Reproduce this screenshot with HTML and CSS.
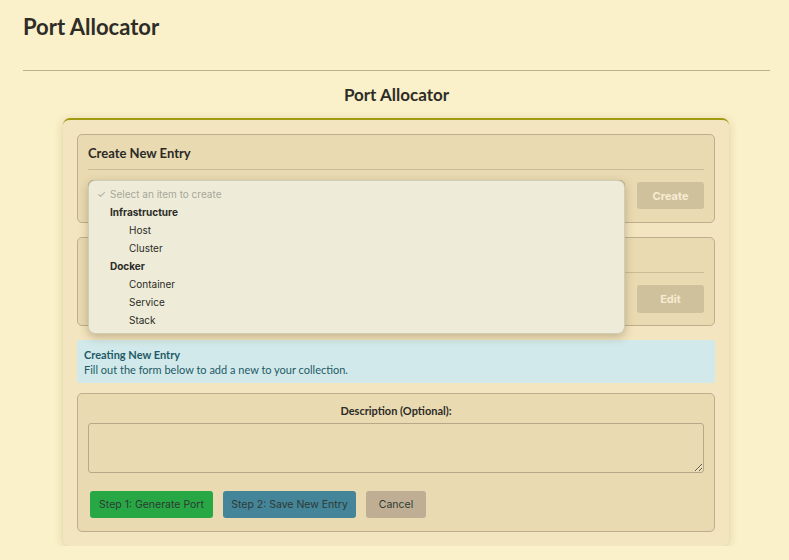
FILE: index.html
```html
<!DOCTYPE html>
<html>
<head>
<meta charset="utf-8">
<link rel="stylesheet" href="styles.css">
</head>
<body>
<div class="page">
  <h1 class="page-title">Port Allocator</h1>
  <hr class="rule">
  <h2 class="app-title">Port Allocator</h2>
  <div class="card">
    <section class="panel">
      <h3 class="panel-head">Create New Entry</h3>
      <div class="row">
        <div class="select"></div>
        <button class="btn-muted">Create</button>
      </div>
      <div class="dropdown">
        <div class="opt opt-selected"><span class="check">✓</span>Select an item to create</div>
        <div class="opt opt-group">Infrastructure</div>
        <div class="opt opt-item">Host</div>
        <div class="opt opt-item">Cluster</div>
        <div class="opt opt-group">Docker</div>
        <div class="opt opt-item">Container</div>
        <div class="opt opt-item">Service</div>
        <div class="opt opt-item">Stack</div>
      </div>
    </section>
    <section class="panel">
      <h3 class="panel-head panel-head-covered"></h3>
      <div class="row">
        <div class="select"></div>
        <button class="btn-muted btn-edit">Edit</button>
      </div>
    </section>
    <div class="alert">
      <div class="alert-title">Creating New Entry</div>
      <div class="alert-text">Fill out the form below to add a new to your collection.</div>
    </div>
    <section class="panel form-panel">
      <label class="field-label">Description (Optional):</label>
      <textarea class="textarea"></textarea>
      <div class="actions">
        <button class="btn btn-green">Step 1: Generate Port</button>
        <button class="btn btn-blue">Step 2: Save New Entry</button>
        <button class="btn btn-tan">Cancel</button>
      </div>
    </section>
  </div>
</div>
</body>
</html>
```
FILE: styles.css
```css
* { box-sizing: border-box; }
html, body { margin: 0; padding: 0; }
body {
  background: #faf0c9;
  font-family: Lato, "Noto Sans", sans-serif;
  color: #2b2a26;
}
.page {
  padding: 0 19px 0 23px;
}
.page-title {
  margin: 0;
  padding-top: 13px;
  font-size: 22px;
  line-height: 28px;
  font-weight: 700;
  color: #2e2c27;
}
.rule {
  margin: 29px 0 0 0;
  border: 0;
  border-top: 1px solid #bdb08f;
  height: 0;
}
.app-title {
  margin: 13px 0 0 0;
  text-align: center;
  font-size: 17px;
  line-height: 22px;
  font-weight: 700;
  color: #2e2c27;
}
.card {
  position: relative;
  margin: 12px 41px 0 40px;
  background: #f3e5bf;
  border-top: 2px solid #a19b12;
  border-radius: 7px;
  padding: 14px 14px 14px 14px;
  box-shadow: 0 2px 8px rgba(120, 100, 40, 0.25);
  display: flex;
  flex-direction: column;
  gap: 14px;
}
.panel {
  position: relative;
  background: #e9dab2;
  border: 1px solid #bfae8e;
  border-radius: 5px;
  padding: 0 10px 11px 10px;
}
.panel-head {
  margin: 0;
  padding: 10px 0 8px 0;
  min-height: 34px;
  font-size: 13px;
  line-height: 16px;
  font-weight: 700;
  border-bottom: 1px solid #cbbb97;
  margin-bottom: 10px;
}
.panel-head-covered {
  min-height: 35px;
}
.row {
  display: flex;
  align-items: center;
  gap: 12px;
}
.select {
  flex: 1;
  height: 31px;
  border: 1px solid #b3a27f;
  border-radius: 5px;
  background: #ece3c2;
}
.btn-muted {
  width: 67px;
  height: 27px;
  border: 0;
  border-radius: 3px;
  background: #d0c19d;
  color: #f6ecd2;
  font-family: Inter, "Noto Sans", sans-serif;
  font-size: 11px;
  font-weight: 700;
}
.btn-edit {
  height: 28px;
}
.dropdown {
  position: absolute;
  left: 10px;
  top: 45px;
  width: 537px;
  height: 154px;
  z-index: 10;
  background: #eeecd8;
  border: 1px solid rgba(120, 110, 80, 0.25);
  border-radius: 7px;
  box-shadow: 0 3px 10px rgba(80, 60, 20, 0.3);
  padding: 4px 0;
  font-family: Inter, "Noto Sans", sans-serif;
  font-size: 10px;
  color: #2a2a26;
}
.opt {
  height: 18px;
  line-height: 18px;
  padding-left: 21px;
  white-space: nowrap;
}
.opt-selected {
  color: #a8a699;
  padding-left: 8px;
}
.check {
  display: inline-block;
  width: 13px;
}
.opt-group {
  font-weight: 700;
}
.opt-item {
  padding-left: 40px;
}
.alert {
  background: #d1e9ea;
  border-radius: 3px;
  padding: 7px 7px 6px 7px;
  color: #1e5a66;
  font-size: 11px;
  line-height: 15px;
}
.alert-title {
  font-weight: 700;
}
.form-panel {
  margin-top: -4px;
  padding-top: 10px;
  padding-bottom: 13px;
}
.field-label {
  display: block;
  text-align: center;
  font-size: 11px;
  line-height: 14px;
  font-weight: 700;
  margin-bottom: 5px;
}
.textarea {
  display: block;
  width: 100%;
  height: 50px;
  background: #e9dab2;
  border: 1px solid #b8a887;
  border-radius: 3px;
  resize: vertical;
}
.actions {
  display: flex;
  gap: 10px;
  margin-top: 18px;
  padding-left: 2px;
}
.btn {
  height: 27px;
  border: 0;
  border-radius: 3px;
  padding: 0;
  white-space: nowrap;
  font-family: Inter, "Noto Sans", sans-serif;
  font-size: 10.5px;
  color: #2d3a33;
}
.btn-green { background: #28a745; width: 123px; }
.btn-blue { background: #458599; width: 133px; }
.btn-tan { background: #bfae94; width: 60px; }
```
